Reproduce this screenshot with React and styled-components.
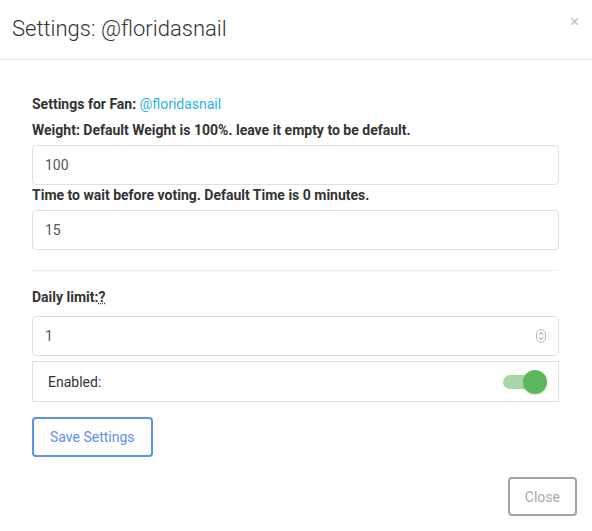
import React from 'react'
import styled, { createGlobalStyle } from 'styled-components'

const GlobalStyle = createGlobalStyle`
  body {
    margin: 0;
    background: #fff;
    font-family: Roboto, "Liberation Sans", sans-serif;
    color: #333;
  }
  * { box-sizing: border-box; }
`;

const Modal = styled.div`
  width: 592px;
  height: 531px;
  display: flex;
  flex-direction: column;
  background: #fff;
`;

const Header = styled.div`
  height: 60px;
  display: flex;
  align-items: center;
  justify-content: space-between;
  padding: 0 13px 0 12px;
  border-bottom: 1px solid #e5e5e5;
`;

const Title = styled.h4`
  margin: 0;
  font-size: 22px;
  font-weight: 300;
  color: #333;
  padding-bottom: 2px;
`;

const CloseX = styled.span`
  align-self: flex-start;
  margin-top: 11px;
  font-size: 17px;
  color: #c4c4c4;
  cursor: pointer;
`;

const Body = styled.div`
  padding: 35px 33px 0 32px;
  display: flex;
  flex-direction: column;
`;

const Label = styled.div`
  font-size: 14px;
  font-weight: 700;
  line-height: 18px;
  color: #333;
  margin-bottom: ${({ mb }) => mb || 6}px;
`;

const FanLink = styled.span`
  color: #1fb5e3;
  font-weight: 400;
`;

const Hint = styled.abbr`
  text-decoration: underline dotted;
  cursor: help;
`;

const Field = styled.div`
  position: relative;
  margin-bottom: ${({ mb }) => mb || 0}px;
`;

const Input = styled.input`
  display: block;
  height: 40px;
  width: 100%;
  border: 1px solid #e0e0e0;
  border-radius: 4px;
  padding: 0 12px;
  font-family: Roboto, "Liberation Sans", sans-serif;
  font-size: 14px;
  color: #555;
  outline: none;
`;

const Spinner = styled.svg`
  position: absolute;
  right: 13px;
  top: 13px;
`;

const Divider = styled.div`
  height: 1px;
  background: #ebebeb;
  margin: 20px 0 17px;
`;

const SwitchRow = styled.div`
  margin-top: 5px;
  height: 41px;
  border: 1px solid #e0e0e0;
  display: flex;
  align-items: center;
  justify-content: space-between;
  padding: 0 11px 0 15px;
  font-size: 14px;
  color: #333;
`;

const Track = styled.div`
  position: relative;
  width: 36px;
  height: 14px;
  border-radius: 7px;
  background: ${({ on }) => (on ? '#a6d7a7' : '#ccc')};
  margin-right: 8px;
  cursor: pointer;
`;

const Thumb = styled.div`
  position: absolute;
  top: -5px;
  left: ${({ on }) => (on ? '20px' : '-4px')};
  width: 24px;
  height: 24px;
  border-radius: 50%;
  background: #5cb85c;
  box-shadow: 0 1px 2px rgba(0, 0, 0, 0.15);
`;

const Button = styled.button`
  height: ${({ h }) => h}px;
  padding: 0 ${({ px }) => px}px;
  background: #fff;
  border: 2px solid ${({ color }) => color};
  color: ${({ text }) => text};
  border-radius: 4px;
  font-family: Roboto, "Liberation Sans", sans-serif;
  font-size: 14px;
  cursor: pointer;
`;

const SaveWrap = styled.div`
  margin-top: 15px;
`;

const Footer = styled.div`
  display: flex;
  justify-content: flex-end;
  padding: 20px 15px 0 0;
`;

export default function App() {
  const [enabled, setEnabled] = React.useState(true)
  return (
    <Modal>
      <GlobalStyle />
      <Header>
        <Title>Settings: @floridasnail</Title>
        <CloseX>×</CloseX>
      </Header>
      <Body>
        <Label mb={8}>
          Settings for Fan: <FanLink>@floridasnail</FanLink>
        </Label>
        <Label>Weight: Default Weight is 100%. leave it empty to be default.</Label>
        <Field mb={1}>
          <Input defaultValue="100" />
        </Field>
        <Label>Time to wait before voting. Default Time is 0 minutes.</Label>
        <Field>
          <Input defaultValue="15" />
        </Field>
        <Divider />
        <Label mb={10}>
          Daily limit:<Hint title="Votes per day">?</Hint>
        </Label>
        <Field>
          <Input defaultValue="1" />
          <Spinner width="10" height="14" viewBox="0 0 10 14">
            <rect x="0.5" y="0.5" width="9" height="13" rx="4.5" fill="#fff" stroke="#bbb" />
            <path d="M3 5.5 L5 3.5 L7 5.5 M3 8.5 L5 10.5 L7 8.5" fill="none" stroke="#666" strokeWidth="0.9" />
          </Spinner>
        </Field>
        <SwitchRow>
          Enabled:
          <Track on={enabled ? 1 : 0} onClick={() => setEnabled(!enabled)}>
            <Thumb on={enabled ? 1 : 0} />
          </Track>
        </SwitchRow>
        <SaveWrap>
          <Button h={40} px={16} color="#5e8ff2" text="#5e8ff2">Save Settings</Button>
        </SaveWrap>
      </Body>
      <Footer>
        <Button h={39} px={15} color="#a3a3a3" text="#aaa">Close</Button>
      </Footer>
    </Modal>
  )
}
